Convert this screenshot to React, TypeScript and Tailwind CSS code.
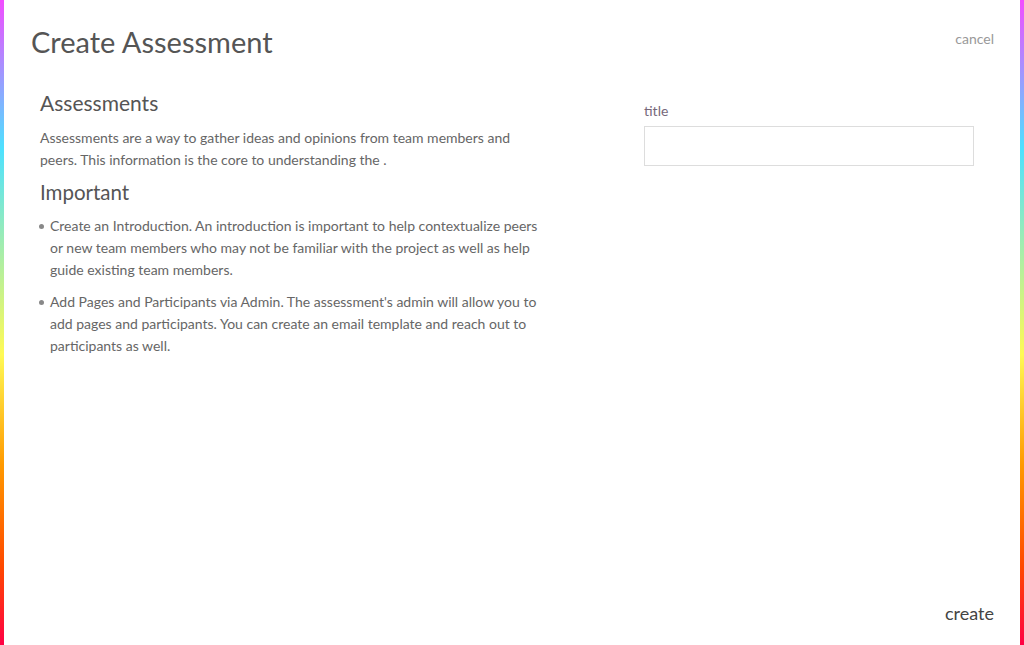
const strip =
  "w-[4px] shrink-0 bg-[linear-gradient(to_bottom,#f24dff_0%,#4de1ff_23%,#fffa55_55%,#ff9a00_72%,#ff4800_88%,#ff0044_100%)]";

const bullets = [
  "Create an Introduction. An introduction is important to help contextualize peers or new team members who may not be familiar with the project as well as help guide existing team members.",
  "Add Pages and Participants via Admin. The assessment's admin will allow you to add pages and participants. You can create an email template and reach out to participants as well.",
];

export default function App() {
  return (
    <div className="flex h-[645px] w-full bg-white font-['Lato',sans-serif] text-[#666]">
      <div className={strip} />
      <div className="flex flex-1 flex-col pl-[27px] pr-[26px]">
        <div className="flex items-start justify-between pt-[24px]">
          <h1 className="text-[29px] leading-[36px] text-[#555]">Create Assessment</h1>
          <button className="mt-[4px] text-[14px] text-[#999]">cancel</button>
        </div>

        <div className="mt-[30px] flex pl-[9px] pr-[20px]">
          <div className="w-[505px]">
            <h2 className="text-[21px] leading-[26px] text-[#555]">Assessments</h2>
            <p className="mt-[11px] text-[14px] leading-[22px]">
              Assessments are a way to gather ideas and opinions from team members and peers. This
              information is the core to understanding the .
            </p>
            <h2 className="mt-[8px] text-[20.5px] leading-[26px] text-[#555]">Important</h2>
            <ul className="mt-[10px] flex flex-col gap-[10px] pl-[10px]">
              {bullets.map((b) => (
                <li key={b} className="relative text-[14px] leading-[22px]">
                  <span className="absolute left-[-11px] top-[9px] h-[5px] w-[5px] rounded-full bg-[#888]" />
                  {b}
                </li>
              ))}
            </ul>
          </div>

          <div className="ml-auto w-[330px] pt-[12px]">
            <label className="block text-[14px] leading-[18px] text-[#76687a]">title</label>
            <input className="mt-[6px] block h-[40px] w-full border border-[#dddddd] bg-white px-2 text-[14px] outline-none" />
          </div>
        </div>

        <div className="mt-auto flex justify-end pb-[18px]">
          <button className="text-[18px] text-[#444]">create</button>
        </div>
      </div>
      <div className={strip} />
    </div>
  );
}
